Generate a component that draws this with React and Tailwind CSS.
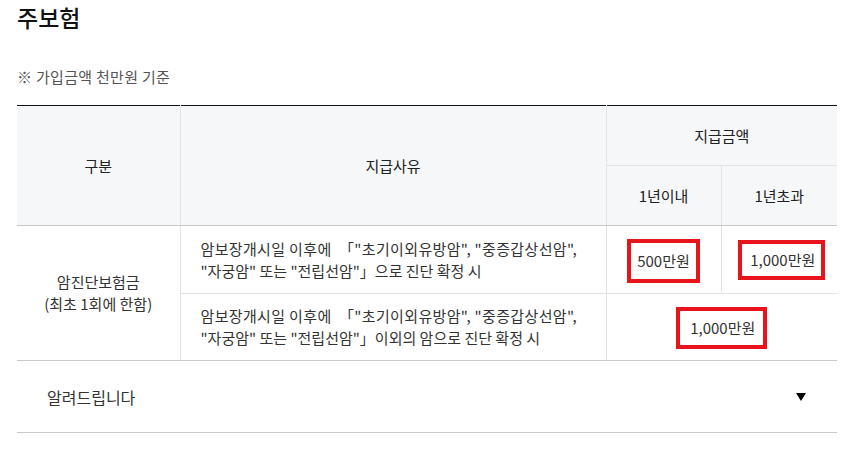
import React from "react";

export default function App() {
  const font = "font-['Noto_Sans_CJK_KR','Noto_Sans',sans-serif]";
  const line1 = "암보장개시일 이후에\u00a0 「\"초기이외유방암\", \"중증갑상선암\",";
  return (
    <div className={`w-[850px] h-[451px] bg-white overflow-hidden ${font}`}>
      <div className="pl-[17px] w-[837px]">
        <h2 className="mt-[2px] text-[23px] leading-[30px] font-medium text-[#111]">주보험</h2>
        <p className="mt-[35px] text-[15px] leading-[20px] tracking-[0.3px] text-[#555]">※ 가입금액 천만원 기준</p>
        <table className="mt-[18px] w-[820px] border-collapse table-fixed text-[15px] leading-[22px]">
          <colgroup>
            <col className="w-[163px]" />
            <col className="w-[426px]" />
            <col className="w-[115px]" />
            <col className="w-[116px]" />
          </colgroup>
          <thead>
            <tr className="h-[60px] border-t border-t-[#111]">
              <th rowSpan={2} className="bg-[#f6f7f9] font-normal text-[#222] border-r border-r-[#e3e3e3] border-b border-b-[#c8c8c8]">구분</th>
              <th rowSpan={2} className="bg-[#f6f7f9] font-normal text-[#222] border-r border-r-[#e3e3e3] border-b border-b-[#c8c8c8]">지급사유</th>
              <th colSpan={2} className="bg-[#f6f7f9] font-normal text-[#222] border-b border-b-[#e3e3e3]">지급금액</th>
            </tr>
            <tr className="h-[60px]">
              <th className="bg-[#f6f7f9] font-normal text-[#222] border-r border-r-[#e3e3e3] border-b border-b-[#c8c8c8]">1년이내</th>
              <th className="bg-[#f6f7f9] font-normal text-[#222] border-b border-b-[#c8c8c8]">1년초과</th>
            </tr>
          </thead>
          <tbody className="text-[#333]">
            <tr className="h-[68px]">
              <td rowSpan={2} className="text-center border-r border-r-[#e3e3e3] border-b border-b-[#c8c8c8]">
                암진단보험금<br />(최초 1회에 한함)
              </td>
              <td className="pl-[20px] border-r border-r-[#e3e3e3] border-b border-b-[#e3e3e3] whitespace-nowrap">
                <span className="tracking-[0.35px]">{line1}</span><br />"자궁암" 또는 "전립선암"」으로 진단 확정 시
              </td>
              <td className="text-center border-r border-r-[#e3e3e3] border-b border-b-[#e3e3e3]">
                <span className="inline-block border-[4px] border-[#e8141c] px-[6px] py-[7px] mt-[3px]">500만원</span>
              </td>
              <td className="text-center border-b border-b-[#e3e3e3]">
                <span className="inline-block border-[4px] border-[#e8141c] pl-[8px] pr-[6px] py-[5px] ml-[5px]">1,000만원</span>
              </td>
            </tr>
            <tr className="h-[67px]">
              <td className="pl-[20px] border-r border-r-[#e3e3e3] border-b border-b-[#c8c8c8] whitespace-nowrap">
                <span className="tracking-[0.35px]">{line1}</span><br />"자궁암" 또는 "전립선암"」이외의 암으로 진단 확정 시
              </td>
              <td colSpan={2} className="text-center border-b border-b-[#c8c8c8]">
                <span className="inline-block border-[4px] border-[#e8141c] pl-[10px] pr-[8px] py-[6px] mt-[2px]">1,000만원</span>
              </td>
            </tr>
          </tbody>
        </table>
        <div className="w-[820px] h-[72px] flex items-center justify-between pl-[30px] pr-[31px] border-b border-b-[#c8c8c8]">
          <span className="text-[16px] leading-[24px] text-[#333]">알려드립니다</span>
          <span className="w-0 h-0 border-l-[5.5px] border-r-[5.5px] border-t-[8px] border-l-transparent border-r-transparent border-t-black" />
        </div>
      </div>
    </div>
  );
}
